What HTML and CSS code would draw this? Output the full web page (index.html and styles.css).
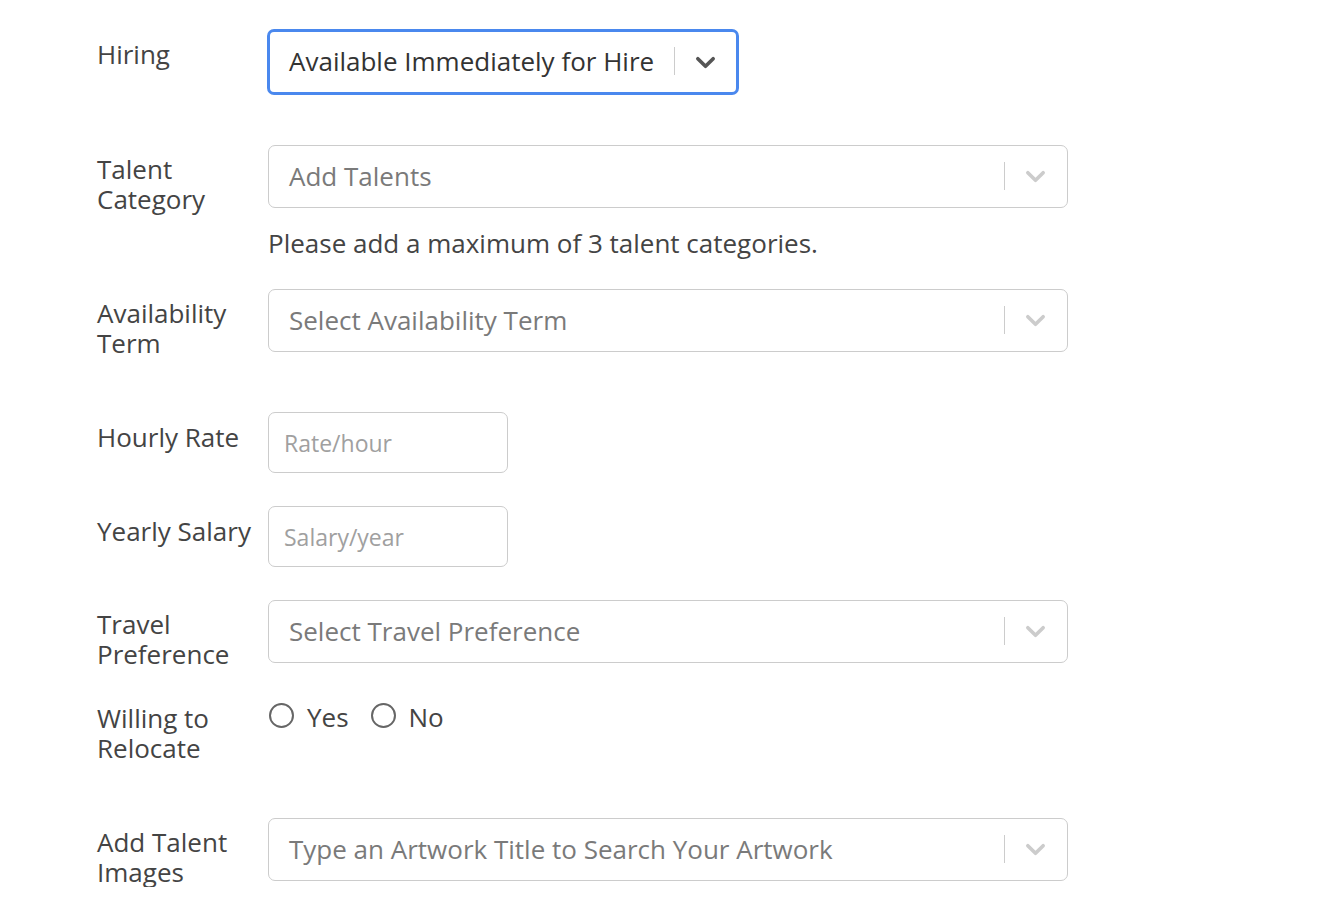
FILE: index.html
```html
<!DOCTYPE html>
<html lang="en">

<head>
    <meta charset="UTF-8">
    <title>Talent Profile</title>
    <link rel="stylesheet" href="styles.css">
</head>

<body>

    <div id="formContainer">

        <!-- Hiring -->
        <div class="formRow rowHiring">
            <div class="fieldLabel">Hiring</div>
            <div class="selectBox focused hiringSelect">
                <span class="selectValue">Available Immediately for Hire</span>
                <span class="selectDivider"></span>
                <svg class="chevron" viewBox="0 0 24 24"><path d="M4 8 L12 16 L20 8" /></svg>
            </div>
        </div>

        <!-- Talent Category -->
        <div class="formRow rowTalent">
            <div class="fieldLabel">Talent<br>Category</div>
            <div>
                <div class="selectBox">
                    <span class="selectPlaceholder">Add Talents</span>
                    <span class="selectDivider"></span>
                    <svg class="chevron" viewBox="0 0 24 24"><path d="M4 8 L12 16 L20 8" /></svg>
                </div>
                <p class="helpText">Please add a maximum of 3 talent categories.</p>
            </div>
        </div>

        <!-- Availability Term -->
        <div class="formRow rowAvailability">
            <div class="fieldLabel">Availability<br>Term</div>
            <div class="selectBox">
                <span class="selectPlaceholder">Select Availability Term</span>
                <span class="selectDivider"></span>
                <svg class="chevron" viewBox="0 0 24 24"><path d="M4 8 L12 16 L20 8" /></svg>
            </div>
        </div>

        <!-- Hourly Rate -->
        <div class="formRow rowRate">
            <div class="fieldLabel">Hourly Rate</div>
            <input type="text" class="textInput" placeholder="Rate/hour">
        </div>

        <!-- Yearly Salary -->
        <div class="formRow rowSalary">
            <div class="fieldLabel">Yearly Salary</div>
            <input type="text" class="textInput" placeholder="Salary/year">
        </div>

        <!-- Travel Preference -->
        <div class="formRow rowTravel">
            <div class="fieldLabel">Travel<br>Preference</div>
            <div class="selectBox">
                <span class="selectPlaceholder">Select Travel Preference</span>
                <span class="selectDivider"></span>
                <svg class="chevron" viewBox="0 0 24 24"><path d="M4 8 L12 16 L20 8" /></svg>
            </div>
        </div>

        <!-- Willing to Relocate -->
        <div class="formRow rowRelocate">
            <div class="fieldLabel">Willing to<br>Relocate</div>
            <div class="radioGroup">
                <label class="radioOption"><span class="radioCircle"></span>Yes</label>
                <label class="radioOption"><span class="radioCircle"></span>No</label>
            </div>
        </div>

        <!-- Add Talent Images -->
        <div class="formRow rowImages">
            <div class="fieldLabel">Add Talent<br>Images</div>
            <div class="selectBox">
                <span class="selectPlaceholder">Type an Artwork Title to Search Your Artwork</span>
                <span class="selectDivider"></span>
                <svg class="chevron" viewBox="0 0 24 24"><path d="M4 8 L12 16 L20 8" /></svg>
            </div>
        </div>

    </div>

</body>

</html>
```

FILE: styles.css
```css
body {
    font-family: 'Open Sans', 'DejaVu Sans', sans-serif;
    margin: 0;
    padding: 0;
    background-color: #fff;
    color: #333;
}

#formContainer {
    padding: 29px 0 0 97px;
}

.formRow {
    display: grid;
    grid-template-columns: 171px 800px;
    align-items: start;
}

.fieldLabel {
    font-size: 26px;
    line-height: 30px;
    color: #444;
    padding-top: 9px;
}

/* row spacing, measured top to top */
.rowHiring {
    margin-bottom: 50px;
}

.rowHiring .fieldLabel {
    padding-top: 10px;
}

.rowTalent {
    margin-bottom: 31px;
}

.rowAvailability {
    margin-bottom: 54px;
}

.rowRate,
.rowSalary {
    margin-bottom: 33px;
}

.rowRate .fieldLabel,
.rowSalary .fieldLabel {
    padding-top: 10px;
}

.rowTravel {
    margin-bottom: 32px;
}

.rowRelocate {
    margin-bottom: 55px;
}

.rowRelocate .fieldLabel {
    padding-top: 2px;
}

.selectBox {
    box-sizing: border-box;
    width: 800px;
    height: 63px;
    border: 1px solid #ccc;
    border-radius: 7px;
    display: flex;
    align-items: center;
    padding: 0 20px 2px 20px;
    font-size: 26px;
}

.hiringSelect {
    width: 472px;
    height: 66px;
    margin-left: -1px;
    border: 3px solid #4a88ee;
    padding-left: 19px;
    padding-right: 19px;
}

.selectValue {
    flex: 1;
    color: #333;
}

.selectPlaceholder {
    flex: 1;
    color: #7a7a7a;
}

.selectDivider {
    width: 1px;
    height: 28px;
    background-color: #ccc;
    margin-right: 19px;
}

.chevron {
    width: 23px;
    height: 23px;
    margin-top: 2px;
    fill: none;
    stroke: #ccc;
    stroke-width: 3.8;
    stroke-linecap: round;
    stroke-linejoin: round;
}

.focused .chevron {
    stroke: #555;
}

.helpText {
    margin: 20px 0 0;
    font-size: 26px;
    line-height: 30px;
    color: #444;
}

.textInput {
    box-sizing: border-box;
    width: 240px;
    height: 61px;
    border: 1px solid #ccc;
    border-radius: 7px;
    padding: 0 15px;
    font-family: 'Open Sans', sans-serif;
    font-size: 23px;
    color: #333;
    outline: none;
}

.textInput::placeholder {
    color: #a0a0a0;
}

.radioGroup {
    display: flex;
    gap: 21px;
    padding-top: 1px;
    font-size: 26px;
    line-height: 30px;
    color: #444;
}

.radioOption {
    display: flex;
    align-items: center;
    gap: 13px;
}

.radioCircle {
    box-sizing: border-box;
    width: 25px;
    height: 25px;
    margin-left: 1px;
    border: 2px solid #666;
    border-radius: 50%;
    margin-top: -4px;
}
```
